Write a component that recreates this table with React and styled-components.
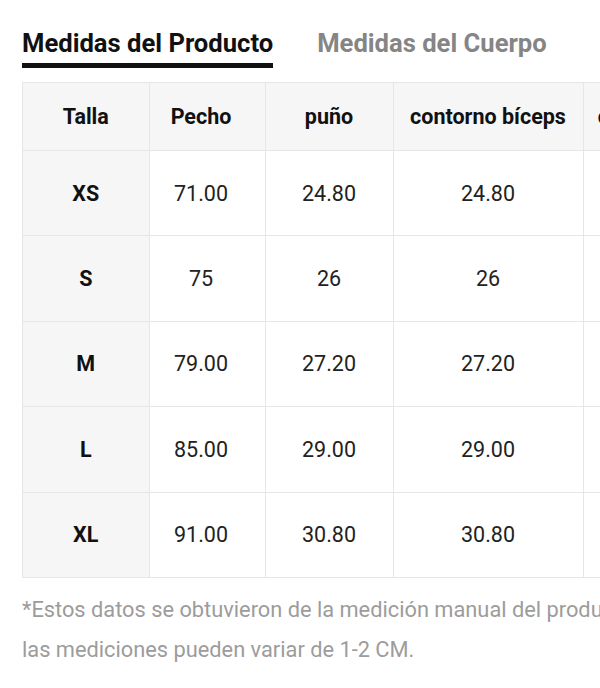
import styled, { createGlobalStyle } from "styled-components";

const BORDER = "#e6e6e6";
const SOFT_BG = "#f6f6f6";

const GlobalStyle = createGlobalStyle`
  html, body {
    margin: 0;
    padding: 0;
    background: #fff;
    overflow: hidden;
  }
  body {
    font-family: Roboto, "Noto Sans", Arial, sans-serif;
    color: #222;
  }
`;

// --- Styled Components ---
const Page = styled.main`
  width: 640px;
  padding: 0 0 0 22px;
`;

const Tabs = styled.nav`
  display: flex;
  gap: 44px;
  padding-top: 23px;
  height: 58px;
  box-sizing: border-box;
`;

const Tab = styled.button`
  background: none;
  border: none;
  padding: 0;
  margin: 0;
  font-family: inherit;
  font-size: 25.6px;
  font-weight: 700;
  line-height: 36px;
  height: 45px;
  box-sizing: border-box;
  color: ${({ active }) => (active ? "#111" : "#858585")};
  border-bottom: 5px solid ${({ active }) => (active ? "#111" : "transparent")};
  cursor: pointer;
`;

const TableScroll = styled.div`
  margin-top: 24px;
  overflow: hidden;
  border-left: 1px solid ${BORDER};
`;

const Table = styled.table`
  border-collapse: collapse;
  table-layout: fixed;
  width: max-content;
`;

const Cell = styled.td`
  position: relative;
  border: 1px solid ${BORDER};
  border-left: ${({ first }) => (first ? "none" : `1px solid ${BORDER}`)};
  text-align: center;
  vertical-align: middle;
  padding: 0 ${({ tucked }) => (tucked ? "12px" : "0")} 0 0;
  white-space: nowrap;
  font-size: 21.5px;
  height: ${({ head }) => (head ? "67px" : "84.4px")};
  background: ${({ head, first }) => (head || first ? SOFT_BG : "#fff")};
  font-weight: ${({ head, first }) => (head || first ? 700 : 400)};
  color: ${({ head, first }) => (head || first ? "#111" : "#222")};

  ${({ first }) =>
    first &&
    `
    &::after {
      content: "";
      position: absolute;
      top: 0;
      bottom: 0;
      right: -17px;
      width: 16px;
      background: linear-gradient(90deg, rgba(0,0,0,0.06), rgba(0,0,0,0));
      pointer-events: none;
    }
  `}
`;

const Note = styled.p`
  margin: 12px 0 0;
  font-size: 21.8px;
  line-height: 40px;
  color: #9c9c9c;
  padding-bottom: 18px;
  border-bottom: 1px solid ${BORDER};
`;

// --- Data ---
const COLUMNS = [
  { label: "Talla", width: 126 },
  { label: "Pecho", width: 116 },
  { label: "puño", width: 128 },
  { label: "contorno bíceps", width: 190 },
  { label: "contorno de cintura", width: 218 },
];

const ROWS = [
  ["XS", "71.00", "24.80", "24.80", "38.00"],
  ["S", "75", "26", "26", "40"],
  ["M", "79.00", "27.20", "27.20", "42.00"],
  ["L", "85.00", "29.00", "29.00", "45.00"],
  ["XL", "91.00", "30.80", "30.80", "48.00"],
];

// --- Component ---
export default function App() {
  return (
    <>
      <GlobalStyle />
      <Page>
        <Tabs>
          <Tab active>Medidas del Producto</Tab>
          <Tab>Medidas del Cuerpo</Tab>
        </Tabs>

        <TableScroll>
          <Table>
            <colgroup>
              {COLUMNS.map((c) => (
                <col key={c.label} style={{ width: c.width }} />
              ))}
            </colgroup>
            <thead>
              <tr>
                {COLUMNS.map((c, i) => (
                  <Cell
                    as="th"
                    key={c.label}
                    head
                    first={i === 0}
                    tucked={i === 1}
                  >
                    {c.label}
                  </Cell>
                ))}
              </tr>
            </thead>
            <tbody>
              {ROWS.map((row) => (
                <tr key={row[0]}>
                  {row.map((v, i) => (
                    <Cell key={i} first={i === 0} tucked={i === 1}>
                      {v}
                    </Cell>
                  ))}
                </tr>
              ))}
            </tbody>
          </Table>
        </TableScroll>

        <Note>
          *Estos datos se obtuvieron de la medición manual del producto, las
          mediciones pueden variar de 1-2 CM.
        </Note>
      </Page>
    </>
  );
}
